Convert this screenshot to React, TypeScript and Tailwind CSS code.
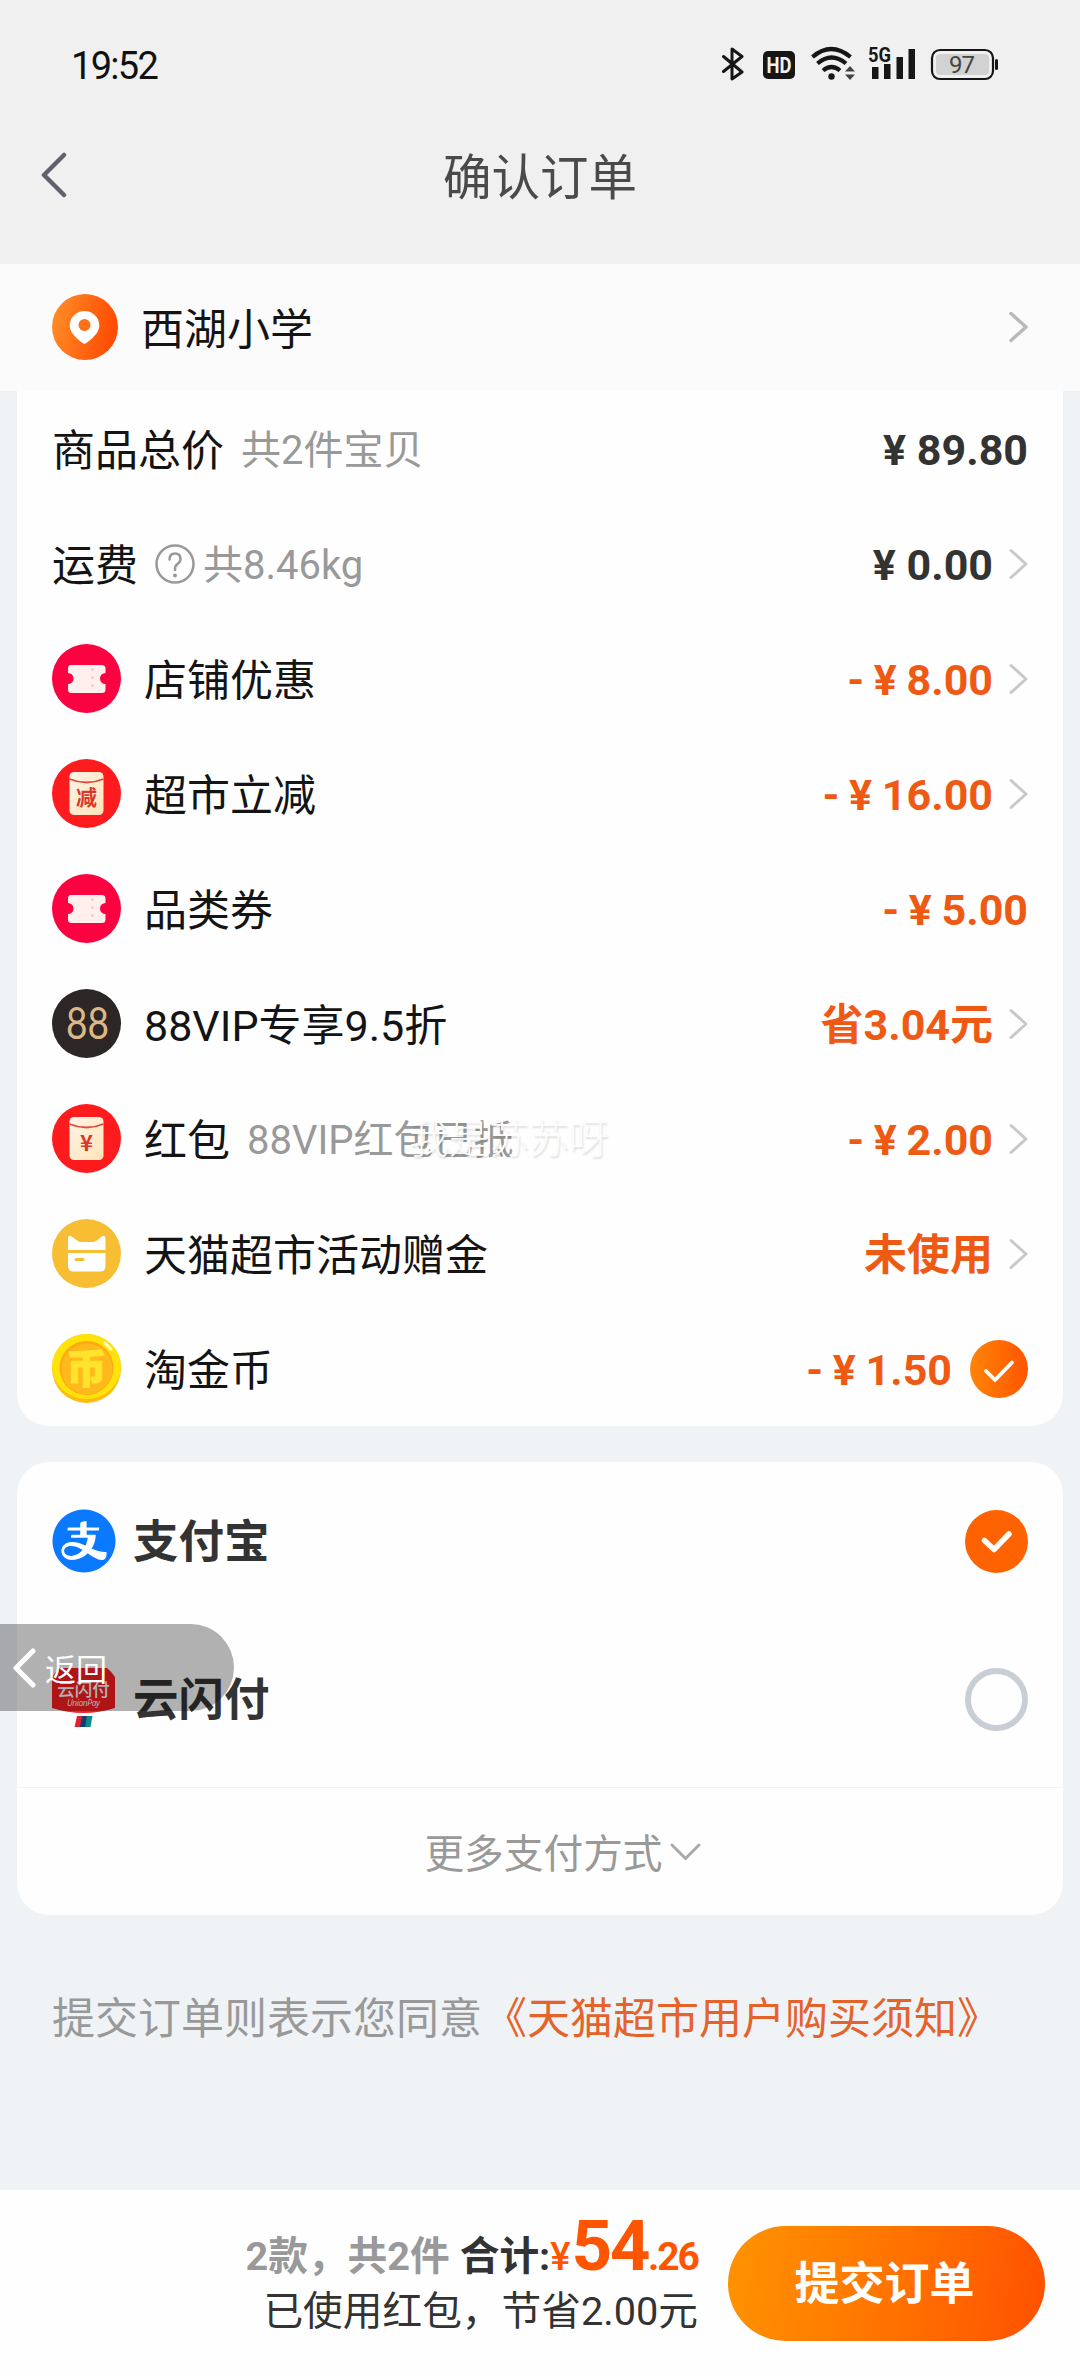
import React from "react";
import { AiFillAlipayCircle } from "react-icons/ai";

const Chevron = ({ color = "#c8c8c8", w = 3 }: { color?: string; w?: number }) => (
  <svg width="20" height="34" viewBox="0 0 20 34" fill="none" className="shrink-0">
    <path d="M3 3.500 L18 17 L3 30.500" stroke={color} strokeWidth={w} strokeLinecap="round" strokeLinejoin="round" />
  </svg>
);

const TicketIcon = () => (
  <svg width="69" height="69" viewBox="0 0 69 69" className="shrink-0">
    <circle cx="34.5" cy="34.5" r="34.5" fill="#fb0240" />
    <path d="M19 21H50Q53.500 21 53.500 24.500V29A5.500 5.500 0 0 0 53.500 40V45.500Q53.500 49 50 49H19.500Q16 49 16 45.500V40A5.500 5.500 0 0 0 16 29V24.500Q16 21 19 21Z" fill="#fff0ed" />
    <path d="M40.500 24v22" stroke="#f9cfc9" strokeWidth="2.500" strokeDasharray="3 5" />
  </svg>
);

const PacketIcon = ({ mark }: { mark: string }) => (
  <svg width="69" height="69" viewBox="0 0 69 69" className="shrink-0">
    <defs>
      <linearGradient id="packet" x1="0" y1="0" x2="1" y2="1">
        <stop offset="0" stopColor="#fff4e6" />
        <stop offset="1" stopColor="#ffe3b8" />
      </linearGradient>
    </defs>
    <circle cx="34.5" cy="34.5" r="34.5" fill="#fd1b1d" />
    <rect x="17.500" y="13" width="34" height="43" rx="4.500" fill="url(#packet)" />
    <path d="M17.500 20Q34.500 27 51.500 20" stroke="#e2463c" strokeWidth="1.800" fill="none" />
    <text x="34.500" y={mark === "减" ? 46 : 46.5} textAnchor="middle" fontSize={mark === "减" ? 21 : 22} fontWeight="700" fill="#d9372c" fontFamily="Noto Sans CJK SC, sans-serif">
      {mark}
    </text>
  </svg>
);

const VipIcon = () => (
  <svg width="69" height="69" viewBox="0 0 69 69" className="shrink-0">
    <circle cx="34.5" cy="34.5" r="34.5" fill="#2c2626" />
    <text x="35.500" y="50" textAnchor="middle" fontSize="44" textLength="43" lengthAdjust="spacingAndGlyphs" fill="#dcb886" fontFamily="Lato, sans-serif">
      88
    </text>
  </svg>
);

const CatCardIcon = () => (
  <svg width="69" height="69" viewBox="0 0 69 69" className="shrink-0">
    <circle cx="34.5" cy="34.5" r="34.5" fill="#f7be33" />
    <path d="M16 31V19.500Q16 15 20.500 18L25 21.500Q27 23 30 23H40Q43 23 45 21.500L49 18Q53.500 15 53.500 19.500V31Z" fill="#fff" />
    <path d="M16 34H53.500V47Q53.500 52.500 48 52.500H21.500Q16 52.500 16 47Z" fill="#fff" />
    <path d="M24 40.500H31" stroke="#f7be33" strokeWidth="3" strokeLinecap="round" />
  </svg>
);

const CoinIcon = () => (
  <svg width="69" height="69" viewBox="0 0 69 69" className="shrink-0">
    <circle cx="34.5" cy="34.5" r="34.5" fill="#fdbb12" />
    <ellipse cx="34.5" cy="32.500" rx="34.500" ry="32.500" fill="#fee20a" />
    <circle cx="34.500" cy="34" r="27" fill="#ffa90f" />
    <circle cx="35" cy="35" r="25.500" fill="#ffb91c" />
    <text x="34.500" y="49" textAnchor="middle" fontSize="40" fontWeight="900" fill="#ffe42b" stroke="#ffe42b" strokeWidth="1" strokeLinejoin="round" fontFamily="Noto Sans CJK SC, sans-serif">
      币
    </text>
    <path d="M53 9l6 6" stroke="#fff9c4" strokeWidth="3" strokeLinecap="round" />
  </svg>
);

const UnionPayIcon = () => (
  <svg width="63" height="63" viewBox="0 0 63 63" className="shrink-0">
    <path d="M8 0H55Q60 4 63 9V40Q31.500 50 0 40V9Q3 4 8 0Z" fill="#fb1d20" />
    <text x="31.500" y="28" textAnchor="middle" fontSize="17.500" fontWeight="500" fill="#fff" fontFamily="Noto Sans CJK SC, sans-serif">云闪付</text>
    <text x="31.500" y="38" textAnchor="middle" fontSize="8.500" fontStyle="italic" fill="#fff" textLength="33" fontFamily="Open Sans, sans-serif">UnionPay</text>
    <path d="M25 48H31L29 59H22.500Z" fill="#e0222f" />
    <path d="M30 48H36L34 59H28Z" fill="#1c3a6e" />
    <path d="M35 48H40.500L38.500 59H33Z" fill="#0c8b8c" />
  </svg>
);

type Row = {
  label: string;
  note?: string;
  icon?: React.ReactNode;
  help?: boolean;
  value: string;
  dark?: boolean;
  end: "arrow" | "check" | "none";
};

const rows: Row[] = [
  { label: "商品总价", note: "共2件宝贝", value: "¥ 89.80", dark: true, end: "none" },
  { label: "运费", note: "共8.46kg", help: true, value: "¥ 0.00", dark: true, end: "arrow" },
  { label: "店铺优惠", icon: <TicketIcon />, value: "- ¥ 8.00", end: "arrow" },
  { label: "超市立减", icon: <PacketIcon mark="减" />, value: "- ¥ 16.00", end: "arrow" },
  { label: "品类券", icon: <TicketIcon />, value: "- ¥ 5.00", end: "none" },
  { label: "88VIP专享9.5折", icon: <VipIcon />, value: "省3.04元", end: "arrow" },
  { label: "红包", note: "88VIP红包已抵", icon: <PacketIcon mark="¥" />, value: "- ¥ 2.00", end: "arrow" },
  { label: "天猫超市活动赠金", icon: <CatCardIcon />, value: "未使用", end: "arrow" },
  { label: "淘金币", icon: <CoinIcon />, value: "- ¥ 1.50", end: "check" },
];

const HelpIcon = () => (
  <svg width="40" height="40" viewBox="0 0 40 40" fill="none" className="ml-[17px] mr-2 shrink-0">
    <circle cx="20" cy="20" r="18.500" stroke="#999" strokeWidth="2.500" />
    <path d="M14.500 15.500Q14.500 9.500 20 9.500T25.500 15Q25.500 18 22.500 20T20 26" stroke="#999" strokeWidth="2.500" strokeLinecap="round" />
    <circle cx="20" cy="31.500" r="2" fill="#999" />
  </svg>
);

const StatusBar = () => (
  <div className="flex h-[128px] items-center justify-between pl-[71px] pr-[81px]">
    <span className="pt-[3px] text-[38px] leading-none tracking-[-1.7px] text-[#111]">19:52</span>
    <svg width="277" height="48" viewBox="722 40 277 48" fill="none">
      <path d="M723.500 56.500L742 72 732 79V49L742 56.500 723.500 71.500" stroke="#161616" strokeWidth="3" strokeLinejoin="round" strokeLinecap="round" />
      <rect x="763" y="51" width="32" height="28" rx="5" fill="#161616" />
      <text x="779" y="73" textAnchor="middle" fontSize="22" fontWeight="700" fill="#f0f0f0" textLength="25" lengthAdjust="spacingAndGlyphs" fontFamily="Roboto, sans-serif">HD</text>
      <g stroke="#161616" strokeWidth="4.200">
        <path d="M812.500 57Q831 41 850.500 57" />
        <path d="M817.500 63.500Q831.500 51.500 846 63.500" />
        <path d="M823 70.500Q831.500 63.500 840 70.500" />
      </g>
      <circle cx="831.500" cy="76.500" r="3.200" fill="#161616" />
      <path d="M850 66L855 71.500H845ZM850 80L855 74.500H845Z" fill="#444" />
      <text x="868" y="62" fontSize="20.500" fontWeight="700" fill="#161616" textLength="23" lengthAdjust="spacingAndGlyphs" fontFamily="Roboto, sans-serif">5G</text>
      <path d="M872 67h6.500v12h-6.500zM884 64h6.500v15h-6.500zM896.500 57h6.500v22h-6.500zM908.500 49h6.500v30h-6.500z" fill="#161616" />
      <rect x="932" y="50" width="61" height="29" rx="8" stroke="#161616" strokeWidth="2.200" />
      <rect x="936" y="54" width="53" height="21" rx="4" fill="#d2d2d2" />
      <rect x="995" y="59" width="3" height="11" rx="1.500" fill="#161616" />
      <text x="962" y="73" textAnchor="middle" fontSize="24" fill="#444" textLength="26" fontFamily="Roboto, sans-serif">97</text>
    </svg>
  </div>
);

const PriceRow = ({ row }: { row: Row }) => (
  <div className="relative flex h-[115px] items-center">
    {row.icon && <div className="mr-[23px] shrink-0">{row.icon}</div>}
    <span className="pt-[5px] text-[43px] leading-none text-[#141414]">{row.label}</span>
    {row.help && <HelpIcon />}
    {row.note && (
      <span className={`pt-[5px] text-[40px] leading-none text-[#999] ${row.help ? "" : "ml-[17px]"}`}>{row.note}</span>
    )}
    {row.label === "红包" && (
      <span className="absolute left-[357px] top-[39px] text-[40px] font-light leading-none text-[#fcfcfc] [text-shadow:1px_2px_2px_rgba(0,0,0,0.13)]">
        我是苏苏呀
      </span>
    )}
    <span
      className={`ml-auto pt-[3px] text-[43px] font-bold leading-none ${row.dark ? "text-[#333]" : "text-[#ee5a14] [word-spacing:-1px]"}`}
    >
      {row.value}
    </span>
    {row.end === "arrow" && (
      <div className="ml-[15px]">
        <Chevron />
      </div>
    )}
    {row.end === "check" && (
      <svg width="58" height="58" viewBox="0 0 58 58" fill="none" className="ml-[18px] shrink-0">
        <defs>
          <linearGradient id="tick" x1="0" y1="0" x2="1" y2="0">
            <stop offset="0" stopColor="#ff8408" />
            <stop offset="1" stopColor="#ff5500" />
          </linearGradient>
        </defs>
        <circle cx="29" cy="29" r="29" fill="url(#tick)" />
        <path d="M16 31L25 40L42 22.500" stroke="#fff" strokeWidth="3.800" strokeLinecap="round" strokeLinejoin="round" />
      </svg>
    )}
  </div>
);

export default function App() {
  return (
    <div className="relative flex h-[2376px] w-[1080px] flex-col overflow-hidden whitespace-nowrap bg-[#eff3f6] font-[Roboto,'Noto_Sans_CJK_SC',sans-serif]">
      <header className="h-[264px] shrink-0 bg-[#f0f0f0]">
        <StatusBar />
        <div className="grid h-[94px] grid-cols-[1fr_auto_1fr] items-center px-10">
          <svg width="28" height="46" viewBox="0 0 28 46" fill="none">
            <path d="M24 3L4 23L24 43" stroke="#62626f" strokeWidth="4.500" strokeLinecap="round" strokeLinejoin="round" />
          </svg>
          <h1 className="pt-2 text-[48.500px] leading-none text-[#4a4a4a]">确认订单</h1>
        </div>
      </header>

      <section className="flex h-[127px] shrink-0 items-center bg-[#fbfbfb] px-[52px] pb-[2px]">
        <svg width="66" height="66" viewBox="0 0 66 66">
          <defs>
            <linearGradient id="pin" x1="0" y1="0" x2="1" y2="0.200">
              <stop offset="0" stopColor="#ff9029" />
              <stop offset="1" stopColor="#ff4d04" />
            </linearGradient>
          </defs>
          <circle cx="33" cy="33" r="33" fill="url(#pin)" />
          <path d="M32.500 17A14.800 14.800 0 0 1 47.300 31.800C47.300 39 40 44.500 34.500 49Q32.500 50.500 30.500 49C25 44.500 17.700 39 17.700 31.800A14.800 14.800 0 0 1 32.500 17Z" fill="#fff" />
          <circle cx="32.500" cy="31" r="6" fill="#ff7119" />
        </svg>
        <span className="ml-[23px] pt-[7px] text-[43px] leading-none text-[#141414]">西湖小学</span>
        <div className="ml-auto">
          <Chevron color="#b9b9b9" w={3.5} />
        </div>
      </section>

      <section className="mx-[17px] shrink-0 rounded-b-[32px] bg-[#fefefe] px-[35px]">
        {rows.map((row) => (
          <PriceRow key={row.label} row={row} />
        ))}
      </section>

      <section className="mx-[17px] mt-9 h-[453px] shrink-0 rounded-[32px] bg-[#fefefe]">
        <div className="flex h-[158px] items-center px-[35px]">
          <div className="flex h-[63px] w-[63px] items-center justify-center">
            <AiFillAlipayCircle className="h-[72px] w-[72px] shrink-0 text-[#0a79fd]" />
          </div>
          <span className="ml-[18px] pt-[4px] text-[45.500px] font-bold leading-none text-[#333]">支付宝</span>
          <svg width="63" height="63" viewBox="0 0 63 63" fill="none" className="ml-auto">
            <circle cx="31.500" cy="31.500" r="31.500" fill="#ff6200" />
            <path d="M19.500 30.500L29 39.500L44 24" stroke="#fff" strokeWidth="5.500" strokeLinecap="round" strokeLinejoin="round" />
          </svg>
        </div>
        <div className="flex h-[158px] items-center px-[35px]">
          <UnionPayIcon />
          <span className="ml-[18px] pt-[4px] text-[45.500px] font-bold leading-none text-[#333]">云闪付</span>
          <div className="ml-auto h-[63px] w-[63px] rounded-full border-[6px] border-[#c9ced6]" />
        </div>
        <div className="mt-[9px] flex h-[128px] items-center justify-center border-t border-[#f1f1f1] pl-[45px]">
          <span className="pt-[6px] text-[39.700px] leading-none text-[#999]">更多支付方式</span>
          <svg width="31" height="20" viewBox="0 0 31 20" fill="none" className="ml-[7px]">
            <path d="M2 3L15.500 16.500L29 3" stroke="#aaa" strokeWidth="3" strokeLinecap="round" strokeLinejoin="round" />
          </svg>
        </div>
      </section>

      <p className="mt-[83px] pl-[52px] text-[43px] leading-none text-[#999]">
        提交订单则表示您同意<span className="ml-[2px] text-[#e5622b]">《天猫超市用户购买须知》</span>
      </p>

      <footer className="mt-auto flex h-[186px] shrink-0 items-center justify-end bg-[#fefefe] pr-[35px]">
        <div className="flex flex-col items-end gap-[11px] self-start pr-[30px] pt-[20px]">
          <div className="flex items-baseline font-bold leading-none">
            <span className="text-[39.700px] text-[#999]">2款，共2件</span>
            <span className="ml-[10px] text-[39.700px] text-[#333]">合计:</span>
            <span className="mr-px text-[38px] font-medium text-[#ff5500]">¥</span>
            <span className="text-[71px] tracking-[-2.5px] text-[#ff5500]">54</span>
            <span className="text-[39px] tracking-[-2px] text-[#ff5500]">.26</span>
          </div>
          <div className="text-[39.700px] leading-none text-[#333]">已使用红包，节省2.00元</div>
        </div>
        <button className="h-[115px] w-[317px] rounded-full bg-linear-100 from-[#ff9300] to-[#ff4f00] pr-1 pt-[3px] text-[45px] font-bold leading-none text-white">
          提交订单
        </button>
      </footer>

      <div className="absolute left-0 top-[1624px] flex h-[87px] w-[234px] items-center rounded-r-full bg-black/30 pl-3">
        <svg width="24" height="42" viewBox="0 0 24 42" fill="none">
          <path d="M21 4L4 21L21 38" stroke="#fff" strokeWidth="5" strokeLinecap="round" strokeLinejoin="round" />
        </svg>
        <span className="ml-[9px] pt-[5px] text-[31px] leading-none text-white">返回</span>
      </div>
    </div>
  );
}
